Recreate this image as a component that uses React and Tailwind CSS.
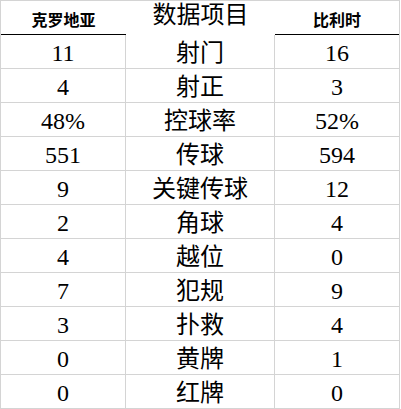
const rows = [
  ["11", "射门", "16"],
  ["4", "射正", "3"],
  ["48%", "控球率", "52%"],
  ["551", "传球", "594"],
  ["9", "关键传球", "12"],
  ["2", "角球", "4"],
  ["4", "越位", "0"],
  ["7", "犯规", "9"],
  ["3", "扑救", "4"],
  ["0", "黄牌", "1"],
  ["0", "红牌", "0"],
];

export default function App() {
  return (
    <div className="w-[401px] h-[409px] bg-white text-black">
      <div className="w-[400px] border-t border-l border-r border-[#d4d4d4]">
        {/* header */}
        <div className="grid grid-cols-[125px_149px_124px] h-[34px]">
          <div className="flex items-center justify-center pt-[2px] border-b border-black font-['Noto_Sans_CJK_SC',sans-serif] font-bold text-[16px] leading-none">
            克罗地亚
          </div>
          <div className="flex items-center justify-center pb-[6px] text-[24px] leading-none font-['Liberation_Serif','Noto_Sans_CJK_SC',serif]">
            数据项目
          </div>
          <div className="flex items-center justify-center pt-[2px] border-b border-black font-['Noto_Sans_CJK_SC',sans-serif] font-bold text-[16px] leading-none">
            比利时
          </div>
        </div>
        {rows.map((r, i) => (
          <div key={i} className="grid grid-cols-[125px_149px_124px] h-[34px] border-b border-[#d4d4d4] text-[24px] leading-none font-['Liberation_Serif','Noto_Sans_CJK_SC',serif]">
            <div className="flex items-center justify-center pt-[3px] border-r border-[#d4d4d4]">{r[0]}</div>
            <div className="flex items-center justify-center pt-[3px] border-r border-[#d4d4d4]">{r[1]}</div>
            <div className="flex items-center justify-center pt-[3px]">{r[2]}</div>
          </div>
        ))}
      </div>
    </div>
  );
}
